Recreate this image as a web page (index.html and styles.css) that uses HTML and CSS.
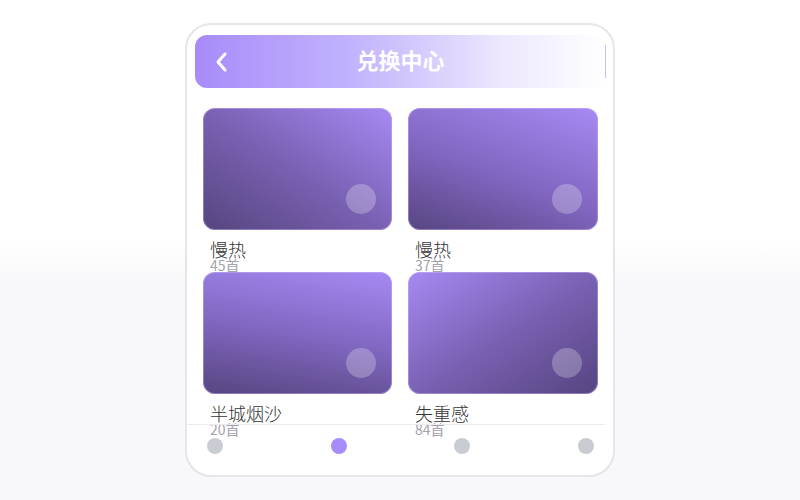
FILE: index.html
```html
<!DOCTYPE html>
<html lang="zh-CN">
<head>
	<meta charset="UTF-8">
	<title>兑换中心</title>
	<link rel="stylesheet" href="styles.css">
</head>
<body>
	<section class="phone">
		<header class="bar">
			<a href="javascript:;" class="back">
				<svg width="14" height="22" viewBox="0 0 14 22"><path d="M11 3 L4 11 L11 19" fill="none" stroke="#fff" stroke-width="3" stroke-linecap="round" stroke-linejoin="round"/></svg>
			</a>
			<h1>兑换中心</h1>
			<span class="side"></span>
		</header>
		<ul class="list">
			<li>
				<div class="cover c1"><i></i></div>
				<p class="name">慢热</p>
				<p class="num">45首</p>
			</li>
			<li>
				<div class="cover c2"><i></i></div>
				<p class="name">慢热</p>
				<p class="num">37首</p>
			</li>
			<li>
				<div class="cover c3"><i></i></div>
				<p class="name">半城烟沙</p>
				<p class="num">20首</p>
			</li>
			<li>
				<div class="cover c4"><i></i></div>
				<p class="name">失重感</p>
				<p class="num">84首</p>
			</li>
		</ul>
		<nav>
			<a href="javascript:;"></a>
			<a href="javascript:;" class="active"></a>
			<a href="javascript:;"></a>
			<a href="javascript:;"></a>
		</nav>
	</section>
</body>
</html>
```

FILE: styles.css
```css
html{
	background: linear-gradient(to bottom, #fff 48%, #f8f8fa 56%);
	height: 100%;
}
body{
	margin: 0;
	font-family: "Noto Sans CJK SC", "Noto Sans", sans-serif;
}
.phone{
	width: 426px;
	height: 450px;
	margin: 23px auto 0;
	border: 2px solid #e6e6ea;
	border-radius: 26px;
	background: #fff;
	display: flex;
	flex-direction: column;
}
.bar{
	margin: 10px 7px 0 8px;
	height: 53px;
	border-radius: 12px;
	background: linear-gradient(to right, #a78bfa, #c4b5fd 40%, #ede8fd 75%, #fff);
	display: grid;
	grid-template-columns: 1fr auto 1fr;
	align-items: center;
	padding-left: 19px;
}
.back{
	width: 14px;
	height: 22px;
	display: block;
}
.back svg{
	display: block;
}
.bar h1{
	margin: -6px 0 0 -19px;
	color: #fff;
	font-size: 22px;
	font-weight: bold;
}
.side{
	justify-self: end;
	width: 1px;
	height: 33px;
	background: #c9bbfb;
}
.list{
	list-style: none;
	margin: 0;
	padding: 20px 15px 0 16px;
	height: 316px;
	display: grid;
	grid-template-columns: 189px 190px;
	grid-auto-rows: 164px;
	column-gap: 16px;
}
.cover{
	height: 122px;
	border-radius: 12px;
	position: relative;
	box-shadow: inset 0 0 0 1px rgba(200,185,250,.45);
}
.cover i{
	position: absolute;
	right: 16px;
	bottom: 16px;
	width: 30px;
	height: 30px;
	border-radius: 50%;
	background: rgba(255,255,255,.25);
}
.c1{
	background: linear-gradient(to top right, #56457f, #7a62b4 50%, #a68af4);
}
.c2{
	background: linear-gradient(200deg, #a68af4, #8066c0 55%, #574580);
}
.c3{
	background: linear-gradient(190deg, #a68af4, #8168c2 50%, #574580);
}
.c4{
	background: linear-gradient(to bottom right, #a68af4, #7a62b4 50%, #564480);
}
.name{
	margin: 11px 0 0 7px;
	font-size: 18px;
	line-height: 17px;
	color: #333;
	font-weight: 300;
}
.num{
	margin: 0 0 0 7px;
	font-size: 14px;
	line-height: 14px;
	color: #a3a3ab;
}
nav{
	margin-right: 8px;
	border-top: 1px solid #ececf0;
	padding: 13px 11px 0 20px;
	display: flex;
	justify-content: space-between;
}
nav a{
	width: 16px;
	height: 16px;
	border-radius: 50%;
	background: #c9ccd2;
	display: block;
}
nav a.active{
	background: #a78bfa;
}
```
